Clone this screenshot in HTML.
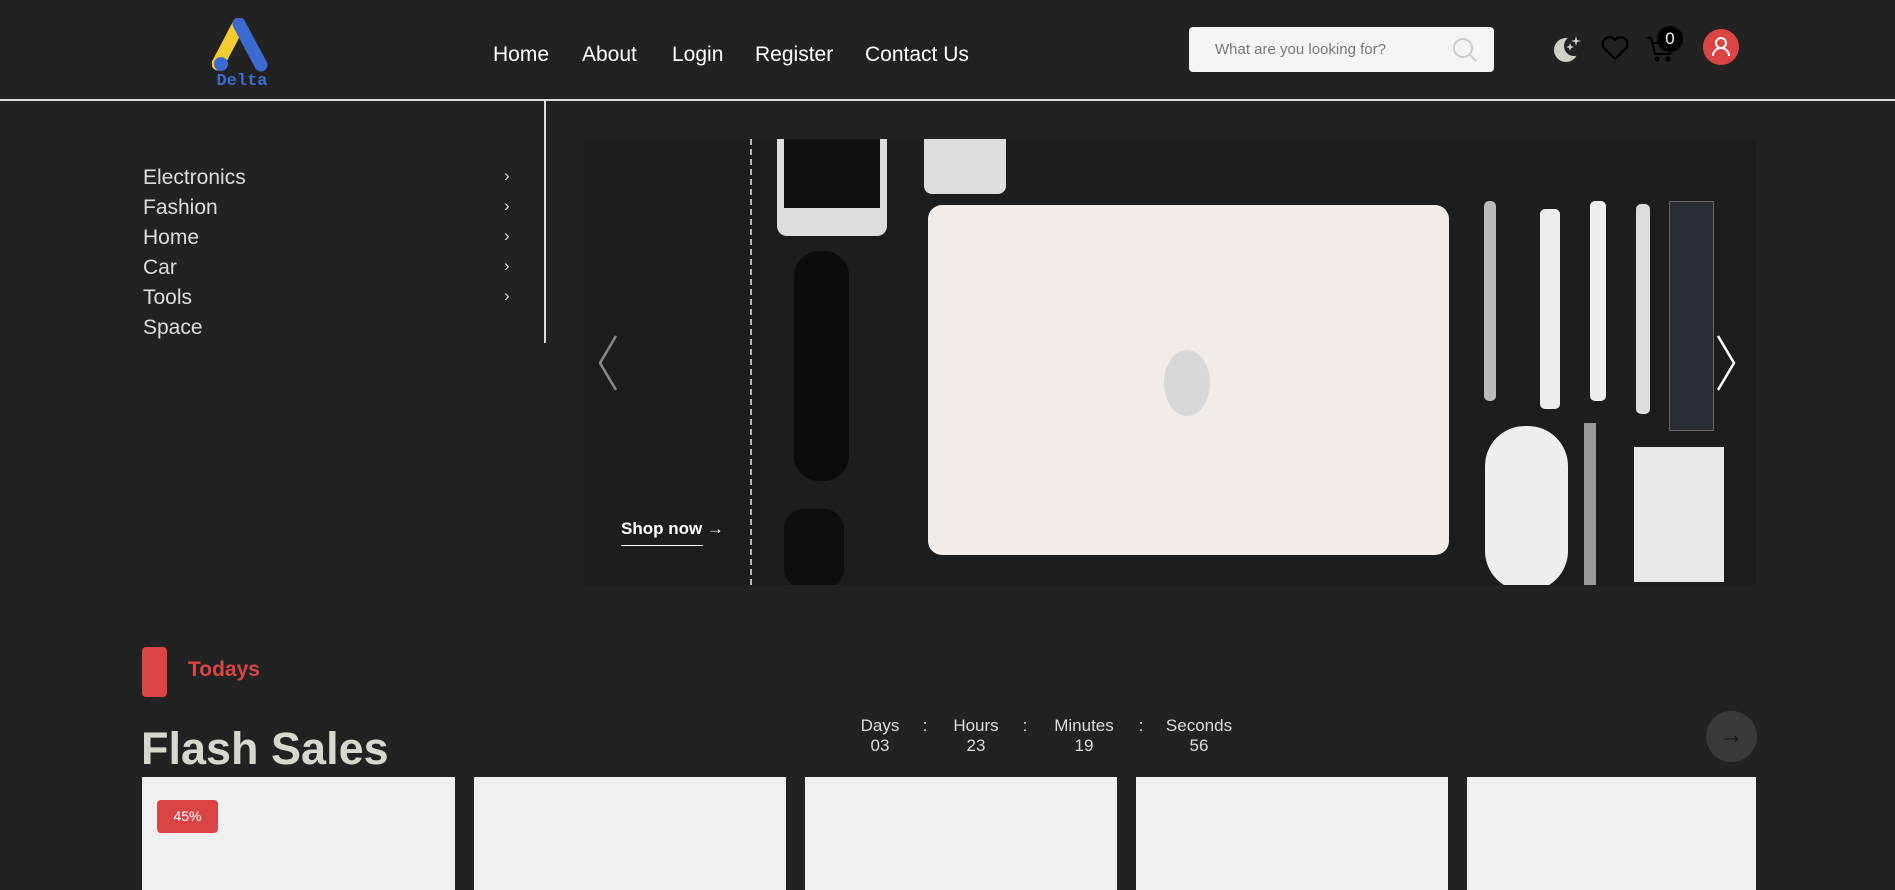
<!DOCTYPE html>
<html><head><meta charset="utf-8"><style>
*{margin:0;padding:0;box-sizing:border-box}
body{width:1895px;height:890px;background:#222;overflow:hidden;font-family:"Liberation Sans",sans-serif;position:relative;color:#fff}
.a{position:absolute}
.nav{top:43px;font-size:21px;color:#fff}
.cat{left:143px;font-size:21px;color:#ddd}
.chev{left:504px;font-size:17px;color:#ddd}
.card{top:777px;height:113px;background:#f0f0f0}
.t{font-size:17px;color:#ddd;text-align:center;width:80px}
</style></head><body>
<!-- logo -->
<svg class="a" style="left:212px;top:18px" width="60" height="72" viewBox="0 0 60 72">
<path d="M27 6 L6 46" stroke="#f5cc30" stroke-width="13" stroke-linecap="round"/>
<path d="M27 6 L49 47" stroke="#3b6bd0" stroke-width="13" stroke-linecap="round"/>
<circle cx="9" cy="46" r="7" fill="#3b6bd0"/>
<text x="30" y="67" font-size="17" font-weight="bold" fill="#3b6bd0" text-anchor="middle" font-family="Liberation Mono">Delta</text>
</svg>
<div class="a nav" style="left:493px">Home</div>
<div class="a nav" style="left:582px">About</div>
<div class="a nav" style="left:672px">Login</div>
<div class="a nav" style="left:755px">Register</div>
<div class="a nav" style="left:865px">Contact Us</div>
<div class="a" style="left:1189px;top:27px;width:305px;height:45px;background:#f5f5f5;border-radius:4px"></div>
<div class="a" style="left:1215px;top:41px;font-size:15px;color:#777">What are you looking for?</div>
<svg class="a" style="left:1450px;top:35px" width="30" height="30"><circle cx="13" cy="13" r="9" fill="none" stroke="#ccc" stroke-width="2"/><path d="M20 20 L26 26" stroke="#ccc" stroke-width="2"/></svg>
<svg class="a" style="left:1552px;top:32px" width="34" height="34"><circle cx="14" cy="18" r="12" fill="#cfd1c8"/><circle cx="22" cy="14" r="10" fill="#222"/><path d="M24 4 L25 8 L29 9 L25 10 L24 14 L23 10 L19 9 L23 8Z" fill="#cfd1c8"/><path d="M18 11 L19 14 L22 15 L19 16 L18 19 L17 16 L14 15 L17 14Z" fill="#cfd1c8"/></svg>
<svg class="a" style="left:1600px;top:34px" width="30" height="28"><path d="M15 25 L3 13 A7 7 0 0 1 15 6 A7 7 0 0 1 27 13Z" fill="none" stroke="#000" stroke-width="2.2"/></svg>
<svg class="a" style="left:1644px;top:34px" width="32" height="30"><path d="M2 4 H7 L11 20 H26 L29 9 H9" fill="none" stroke="#000" stroke-width="2"/><circle cx="13" cy="25" r="2.5" fill="#000"/><circle cx="24" cy="25" r="2.5" fill="#000"/></svg>
<div class="a" style="left:1657px;top:26px;width:26px;height:26px;border-radius:50%;background:#000;color:#fff;font-size:17px;text-align:center;line-height:26px">0</div>
<div class="a" style="left:1703px;top:29px;width:36px;height:36px;border-radius:50%;background:#db4444"></div>
<svg class="a" style="left:1703px;top:29px" width="36" height="36"><circle cx="18" cy="14" r="5" fill="none" stroke="#fff" stroke-width="2"/><path d="M10 27 A8 8 0 0 1 26 27" fill="none" stroke="#fff" stroke-width="2"/></svg>
<div class="a" style="left:0;top:99px;width:1895px;height:2px;background:#ddd"></div>
<div class="a" style="left:544px;top:100px;width:2px;height:243px;background:#ddd"></div>
<div class="a cat" style="top:166px">Electronics</div>
<div class="a cat" style="top:196px">Fashion</div>
<div class="a cat" style="top:226px">Home</div>
<div class="a cat" style="top:256px">Car</div>
<div class="a cat" style="top:286px">Tools</div>
<div class="a cat" style="top:316px">Space</div>
<div class="a chev" style="top:166px">›</div><div class="a chev" style="top:196px">›</div><div class="a chev" style="top:226px">›</div><div class="a chev" style="top:256px">›</div><div class="a chev" style="top:286px">›</div>
<!-- banner -->
<div class="a" style="left:584px;top:139px;width:1172px;height:446px;background:#1c1d1f;overflow:hidden">
<div class="a" style="left:166px;top:0;width:2px;height:446px;border-left:2px dashed #bbb"></div>
<div class="a" style="left:193px;top:-10px;width:110px;height:107px;background:#ddd;border-radius:10px"></div>
<div class="a" style="left:200px;top:-5px;width:96px;height:74px;background:#111"></div>
<div class="a" style="left:340px;top:-10px;width:82px;height:65px;background:#ddd;border-radius:8px"></div>
<div class="a" style="left:210px;top:112px;width:55px;height:230px;background:#0c0c0c;border-radius:25px"></div>
<div class="a" style="left:200px;top:370px;width:60px;height:80px;background:#0e0e0e;border-radius:20px"></div>
<div class="a" style="left:344px;top:66px;width:521px;height:350px;background:#f2ece8;border-radius:14px"></div>
<div class="a" style="left:580px;top:211px;width:46px;height:66px;background:#d8d8d8;border-radius:50%"></div>
<div class="a" style="left:900px;top:62px;width:12px;height:200px;background:#bbb;border-radius:5px"></div>
<div class="a" style="left:956px;top:70px;width:20px;height:200px;background:#eee;border-radius:5px"></div>
<div class="a" style="left:1006px;top:62px;width:16px;height:200px;background:#eee;border-radius:5px"></div>
<div class="a" style="left:1052px;top:65px;width:14px;height:210px;background:#ddd;border-radius:5px"></div>
<div class="a" style="left:1085px;top:62px;width:45px;height:230px;background:#2a2f35;border:1px solid #666"></div>
<div class="a" style="left:901px;top:287px;width:83px;height:165px;background:#eee;border-radius:40px"></div>
<div class="a" style="left:1000px;top:284px;width:12px;height:170px;background:#999"></div>
<div class="a" style="left:1050px;top:308px;width:90px;height:135px;background:#e8e8e8"></div>
<div class="a" style="left:37px;top:380px;font-size:17px;font-weight:bold;color:#fff">Shop now →</div>
<div class="a" style="left:37px;top:406px;width:82px;height:1px;background:#fff"></div>
<svg class="a" style="left:12px;top:195px" width="24" height="58"><path d="M20 2 L4 29 L20 56" fill="none" stroke="#888" stroke-width="2.5"/></svg>
<svg class="a" style="left:1130px;top:195px" width="24" height="58"><path d="M4 2 L20 29 L4 56" fill="none" stroke="#fff" stroke-width="2.5"/></svg>
</div>
<!-- flash -->
<div class="a" style="left:142px;top:647px;width:25px;height:50px;background:#db4444;border-radius:4px"></div>
<div class="a" style="left:188px;top:658px;font-size:21px;font-weight:bold;color:#db4444">Todays</div>
<div class="a" style="left:141px;top:723px;font-size:45px;font-weight:bold;color:#d6d8ce">Flash Sales</div>
<div class="a t" style="left:840px;top:716px">Days<br>03</div>
<div class="a t" style="left:936px;top:716px">Hours<br>23</div>
<div class="a t" style="left:1044px;top:716px">Minutes<br>19</div>
<div class="a t" style="left:1159px;top:716px">Seconds<br>56</div>
<div class="a t" style="left:885px;top:716px">:</div>
<div class="a t" style="left:985px;top:716px">:</div>
<div class="a t" style="left:1101px;top:716px">:</div>
<div class="a" style="left:1706px;top:711px;width:51px;height:51px;border-radius:50%;background:#3a3a3a;color:#111;font-size:24px;text-align:center;line-height:49px">→</div>
<div class="a card" style="left:142px;width:313px"></div>
<div class="a card" style="left:474px;width:312px"></div>
<div class="a card" style="left:805px;width:312px"></div>
<div class="a card" style="left:1136px;width:312px"></div>
<div class="a card" style="left:1467px;width:289px"></div>
<div class="a" style="left:157px;top:800px;width:61px;height:33px;background:#db4444;border-radius:4px;color:#fff;font-size:14px;text-align:center;line-height:33px">45%</div>
</body></html>
